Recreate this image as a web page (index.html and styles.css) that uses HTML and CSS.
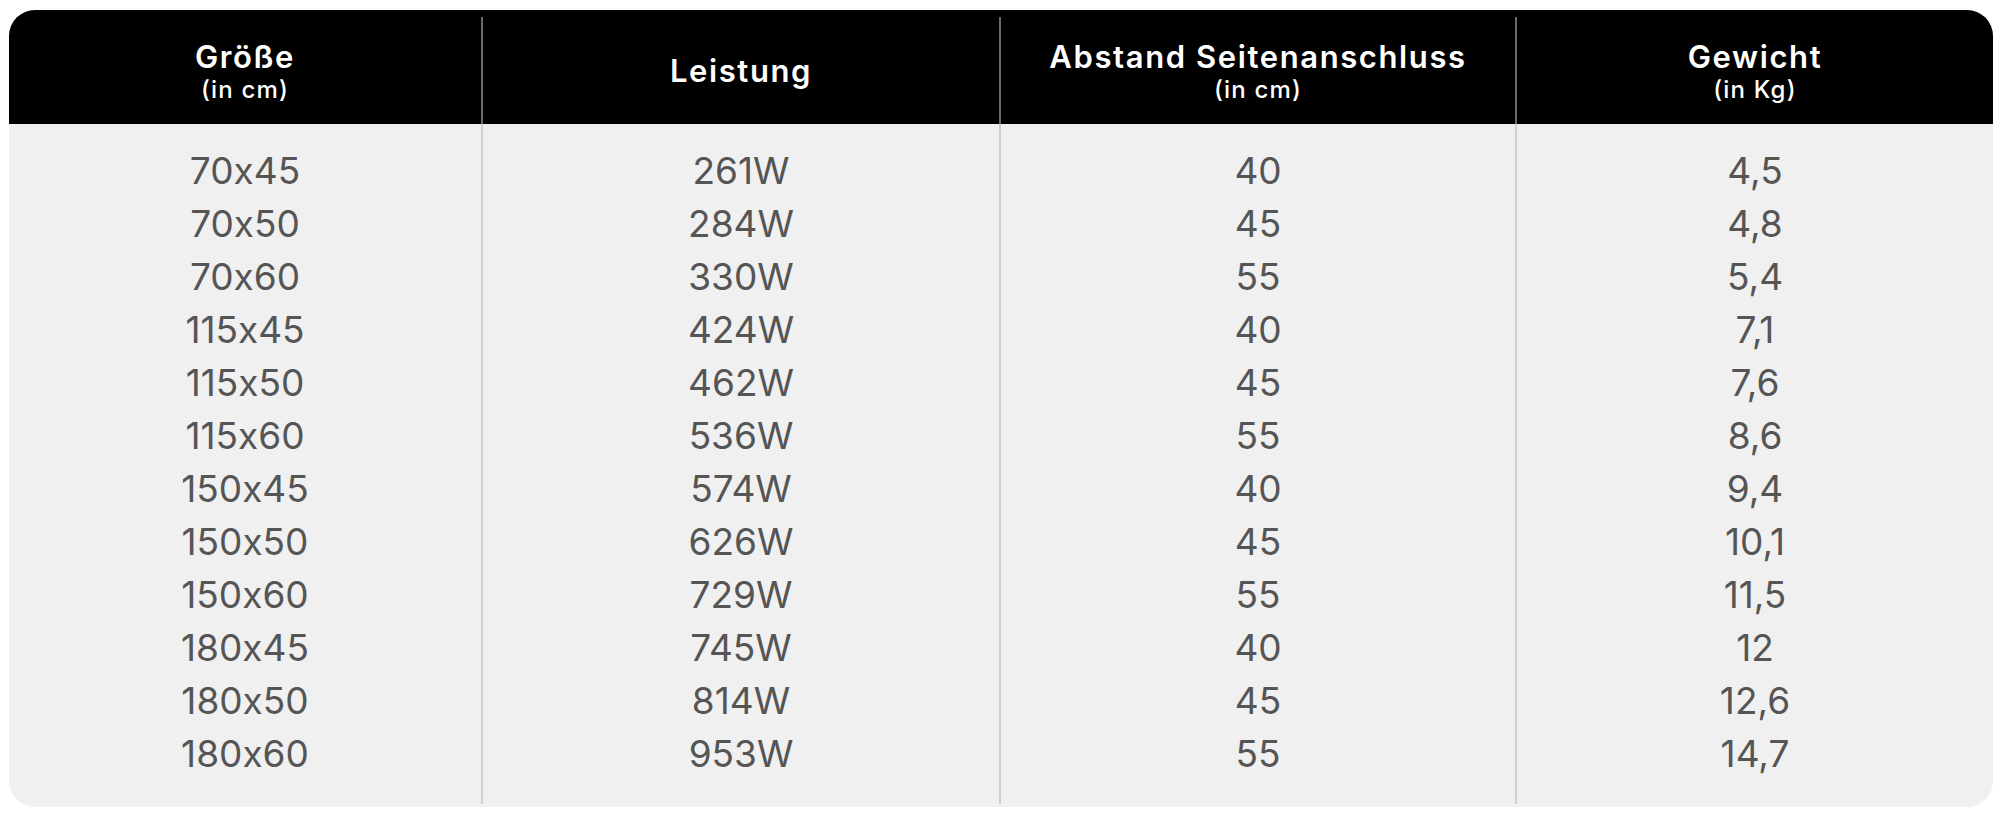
FILE: index.html
```html
<!DOCTYPE html>
<html lang="de">
<head>
<meta charset="utf-8">
<title>Technische Daten</title>
<link rel="stylesheet" href="styles.css">
</head>
<body>
<div class="card">
  <div class="head">
    <div class="hcell"><span class="ht">Größe</span><span class="hs">(in cm)</span></div>
    <div class="hcell"><span class="ht">Leistung</span></div>
    <div class="hcell"><span class="ht">Abstand Seitenanschluss</span><span class="hs">(in cm)</span></div>
    <div class="hcell"><span class="ht">Gewicht</span><span class="hs">(in Kg)</span></div>
  </div>
  <div class="body">
    <div class="col">
      <div class="cell">70x45</div><div class="cell">70x50</div><div class="cell">70x60</div>
      <div class="cell">115x45</div><div class="cell">115x50</div><div class="cell">115x60</div>
      <div class="cell">150x45</div><div class="cell">150x50</div><div class="cell">150x60</div>
      <div class="cell">180x45</div><div class="cell">180x50</div><div class="cell">180x60</div>
    </div>
    <div class="col">
      <div class="cell">261W</div><div class="cell">284W</div><div class="cell">330W</div>
      <div class="cell">424W</div><div class="cell">462W</div><div class="cell">536W</div>
      <div class="cell">574W</div><div class="cell">626W</div><div class="cell">729W</div>
      <div class="cell">745W</div><div class="cell">814W</div><div class="cell">953W</div>
    </div>
    <div class="col">
      <div class="cell">40</div><div class="cell">45</div><div class="cell">55</div>
      <div class="cell">40</div><div class="cell">45</div><div class="cell">55</div>
      <div class="cell">40</div><div class="cell">45</div><div class="cell">55</div>
      <div class="cell">40</div><div class="cell">45</div><div class="cell">55</div>
    </div>
    <div class="col">
      <div class="cell">4,5</div><div class="cell">4,8</div><div class="cell">5,4</div>
      <div class="cell">7,1</div><div class="cell">7,6</div><div class="cell">8,6</div>
      <div class="cell">9,4</div><div class="cell">10,1</div><div class="cell">11,5</div>
      <div class="cell">12</div><div class="cell">12,6</div><div class="cell">14,7</div>
    </div>
  </div>
</div>
</body>
</html>
```
FILE: styles.css
```css
* { box-sizing: border-box; }
html, body { margin: 0; padding: 0; background: #ffffff; }
body {
  font-family: Inter, "Open Sans", "DejaVu Sans", sans-serif;
  font-feature-settings: "calt" 0;
  padding: 10px 7px 0 9px;
}
.card {
  width: 1984px;
  height: 797px;
  border-radius: 26px;
  overflow: hidden;
  background: #f0f0f0;
  display: flex;
  flex-direction: column;
}
.head, .body {
  display: grid;
  grid-template-columns: 472px 518px 516px 478px;
}
.head {
  background: #000000;
  height: 114px;
  padding-top: 7px;
}
.hcell {
  display: flex;
  flex-direction: column;
  align-items: center;
  justify-content: center;
  color: #ffffff;
}
.hcell + .hcell { border-left: 2px solid #6a6a6a; }
.ht {
  font-size: 31px;
  font-weight: 600;
  letter-spacing: 1.6px;
  line-height: 38px;
}
.hs {
  font-size: 24px;
  font-weight: 500;
  letter-spacing: 1.2px;
  line-height: 29px;
  margin-top: -1px;
}
.body {
  flex: 1;
  padding-bottom: 3px;
}
.col {
  padding-top: 20px;
  display: flex;
  flex-direction: column;
  align-items: center;
}
.col + .col { border-left: 2px solid #d0d0d0; }
.cell {
  height: 53px;
  line-height: 53px;
  font-size: 37px;
  font-weight: 400;
  color: #555555;
}
```
